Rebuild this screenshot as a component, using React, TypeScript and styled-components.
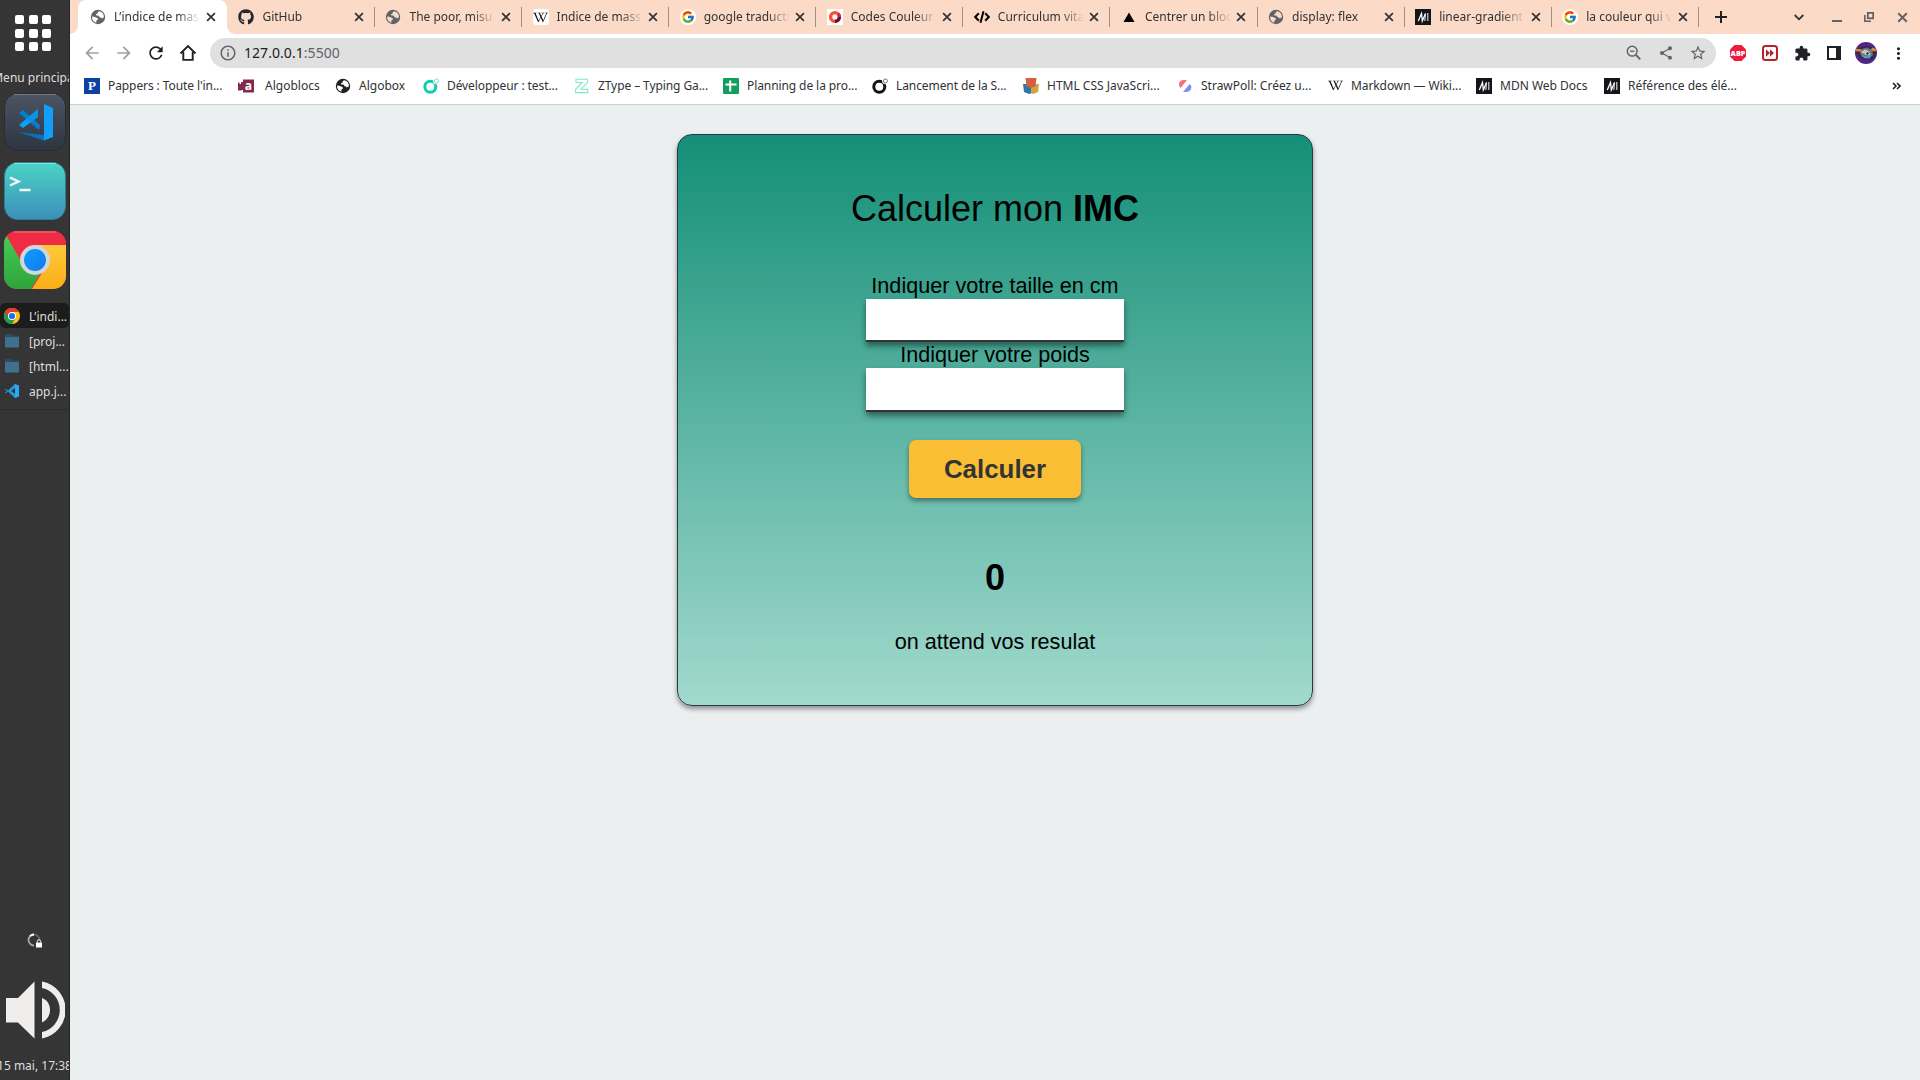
import React from "react";
import styled, { createGlobalStyle, css } from "styled-components";
import { FaGithub, FaWikipediaW } from "react-icons/fa";
import { FcGoogle } from "react-icons/fc";
import {
  MdArrowBack,
  MdArrowForward,
  MdRefresh,
  MdOutlineInfo,
  MdShare,
  MdStarBorder,
  MdExtension,
  MdMoreVert,
} from "react-icons/md";

const GlobalStyle = createGlobalStyle`
  * { box-sizing: border-box; }
  body { margin: 0; background: #ebeff0; overflow: hidden; }
`;

const Desktop = styled.div`
  display: flex;
  width: 1920px;
  height: 1080px;
  overflow: hidden;
  font-family: "Noto Sans", sans-serif;
  font-size: 12px;
`;

/* ---------- Dock ---------- */

const Dock = styled.aside`
  display: flex;
  flex-direction: column;
  align-items: center;
  flex: none;
  width: 70px;
  height: 1080px;
  padding-top: 15px;
  overflow: hidden;
  background: #353535;
  border-right: 1px solid #262626;
  color: #dfdfdf;
`;

const AppGrid = styled.div`
  display: grid;
  grid-template-columns: repeat(3, 9px);
  grid-auto-rows: 9px;
  gap: 4.5px;
  width: 36px;
  margin-right: 3px;
`;

const GridDot = styled.i`
  background: #fff;
  border-radius: 2px;
`;

const DockLabel = styled.div<{ $top: number }>`
  display: flex;
  justify-content: center;
  align-self: stretch;
  margin-top: ${(p) => p.$top}px;
  height: 18px;
  line-height: 18px;
  white-space: nowrap;
`;

const Launchers = styled.div`
  display: flex;
  flex-direction: column;
  gap: 11.3px;
  margin-top: 5.5px;
  svg { display: block; }
`;

const TaskList = styled.div`
  display: flex;
  flex-direction: column;
  align-self: stretch;
  margin-top: 14px;
  padding-bottom: 6px;
  border-bottom: 1px solid #2c2c2c;
`;

const Task = styled.div<{ $active?: boolean }>`
  display: flex;
  align-items: center;
  gap: 9px;
  height: 25px;
  padding-left: 4px;
  padding-top: 1px;
  border-radius: 5px;
  white-space: nowrap;
  overflow: hidden;
  background: ${(p) => (p.$active ? "#1c1c1c" : "transparent")};
  svg { flex: none; }
`;

const Tray = styled.div`
  display: flex;
  flex-direction: column;
  align-items: center;
  margin-top: auto;
  align-self: stretch;
  padding-bottom: 5px;
  svg { display: block; }
`;

const SpeakerSlot = styled.div`
  margin-top: 32px;
  margin-left: 1px;
`;

/* ---------- Browser chrome ---------- */

const Browser = styled.main`
  display: flex;
  flex-direction: column;
  width: 1850px;
`;

const TabStrip = styled.div`
  display: flex;
  height: 34px;
  flex: none;
  padding-left: 8px;
  background: #fcdac8;
`;

const Tab = styled.div<{ $active?: boolean; $divider?: boolean }>`
  display: flex;
  align-items: center;
  position: relative;
  width: 147.1px;
  height: 34px;
  padding-left: 10px;
  flex: none;
  color: #303236;
  ${(p) =>
    p.$active &&
    css`
      width: 149px;
      margin-right: 1.4px;
      padding-left: 12px;
      background: #fff;
      border-radius: 8px 8px 0 0;
      &::before,
      &::after {
        content: "";
        position: absolute;
        bottom: 0;
        width: 8px;
        height: 8px;
      }
      &::before {
        left: -8px;
        background: radial-gradient(circle at 0 0, transparent 7.5px, #fff 8px);
      }
      &::after {
        right: -8px;
        background: radial-gradient(circle at 100% 0, transparent 7.5px, #fff 8px);
      }
    `}
  ${(p) =>
    p.$divider &&
    css`
      &::after {
        content: "";
        position: absolute;
        right: 0.5px;
        top: 7px;
        width: 1px;
        height: 20px;
        background: #a08d86;
      }
    `}
`;

const Favicon = styled.span<{ $bg?: string; $round?: string }>`
  display: flex;
  align-items: center;
  justify-content: center;
  flex: none;
  width: 16px;
  height: 16px;
  background: ${(p) => p.$bg ?? "transparent"};
  border-radius: ${(p) => p.$round ?? "0"};
  svg { display: block; flex: none; }
`;

const TabTitle = styled.span`
  width: 88px;
  margin-left: 8px;
  white-space: nowrap;
  line-height: 18px;
  mask-image: linear-gradient(to right, #000 63px, transparent 86px);
`;

const CloseSlot = styled.span`
  display: flex;
  margin-left: 3.5px;
`;

const NewTab = styled.div`
  display: flex;
  align-items: center;
  margin-left: 15.6px;
`;

const WindowButtons = styled.div`
  display: flex;
  align-items: center;
  margin-left: auto;
  padding-right: 12px;
`;

const WinButton = styled.span<{ $gap: number }>`
  display: flex;
  margin-right: ${(p) => p.$gap}px;
`;

const Toolbar = styled.div`
  display: flex;
  align-items: center;
  height: 38px;
  flex: none;
  padding-left: 12px;
  background: #fff;
  color: #202124;
`;

const NavButton = styled.span<{ $muted?: boolean }>`
  display: flex;
  justify-content: center;
  width: 20px;
  margin-right: 12px;
  color: ${(p) => (p.$muted ? "#a0a1a3" : "#202124")};
`;

const Omnibox = styled.div`
  display: flex;
  align-items: center;
  width: 1506px;
  height: 30px;
  padding: 0 9px;
  border-radius: 15px;
  background: #e0e0e0;
  color: #5f6368;
`;

const Address = styled.span`
  margin-left: 7px;
  margin-right: auto;
  font-size: 14px;
  line-height: 20px;
  letter-spacing: 0.05px;
  b { font-weight: 400; color: #202124; }
`;

const OmniIcon = styled.span`
  display: flex;
  justify-content: center;
  width: 18px;
  margin-left: 14px;
`;

const Extensions = styled.div`
  display: flex;
  align-items: center;
  padding-left: 11px;
`;

const Extension = styled.span<{ $w: number }>`
  display: flex;
  justify-content: center;
  width: ${(p) => p.$w}px;
`;

const BookmarkBar = styled.div`
  display: flex;
  align-items: center;
  height: 33px;
  flex: none;
  padding: 0 19px 5px 14px;
  background: #fff;
  border-bottom: 1px solid #c9d1ce;
  color: #303236;
`;

const Bookmark = styled.div<{ $w: number; $tight?: boolean }>`
  display: flex;
  align-items: center;
  gap: 8px;
  flex: none;
  width: ${(p) => p.$w}px;
  height: 26px;
  line-height: 18px;
  letter-spacing: ${(p) => (p.$tight ? "-0.09px" : "normal")};
  white-space: nowrap;
`;

/* Algoblocs has a wider icon slot than its neighbours. */
const WideIcon = styled.span`
  display: flex;
  padding-right: 3px;
`;

const MoreBookmarks = styled.span`
  display: flex;
  margin-left: auto;
`;

const Letter = styled.span`
  font: bold 13px/16px "Liberation Serif", serif;
  color: #fff;
`;

/* ---------- Page ---------- */

const Page = styled.section`
  flex: 1;
  padding-top: 29px;
  padding-left: 607px;
  background: #ebeff0;
  font-family: "Liberation Sans", Arial, sans-serif;
  color: #000;
`;

const Card = styled.div`
  display: flex;
  flex-direction: column;
  align-items: center;
  width: 636px;
  height: 572px;
  padding-top: 53px;
  border: 1px solid #273746;
  border-radius: 15px;
  background: linear-gradient(#148f77, #a2d9ce);
  box-shadow: 0 3px 5px rgba(0, 0, 0, 0.4);
`;

const Title = styled.h1`
  margin: 0 0 43px;
  font-size: 36px;
  font-weight: 400;
  line-height: 42px;
`;

const Label = styled.label`
  font-size: 21.6px;
  line-height: 26px;
`;

const Field = styled.input<{ $h: number }>`
  width: 258px;
  height: ${(p) => p.$h}px;
  padding: 0 10px;
  border: 0;
  border-bottom: 2px solid #333;
  outline: 0;
  background: #fff;
  box-shadow: 0 4px 6px rgba(0, 0, 0, 0.45);
`;

const Submit = styled.button`
  width: 172px;
  height: 58px;
  margin: 28px 0 59px;
  padding: 0;
  border: 0;
  border-radius: 7px;
  background: #f9be33;
  box-shadow: 0 3px 5px rgba(0, 0, 0, 0.4);
  color: #333;
  font: bold 25.92px/58px "Liberation Sans", Arial, sans-serif;
`;

const Score = styled.strong`
  font-size: 36px;
  line-height: 42px;
`;

const Result = styled.p`
  margin: 30px 0 0;
  font-size: 21.6px;
  line-height: 26px;
`;

/* ---------- Drawings ---------- */

const Globe = ({ color = "#5f6368", land = "#fcdac8" }) => (
  <svg width="16" height="16" viewBox="0 0 16 16">
    <circle cx="8" cy="8" r="7.2" fill={color} />
    <path
      d="M9.2 2.2 7.8 3.1 7.6 4.6 6 5.2 6.2 6.5 8.4 6.6 9.6 8.2 11.2 8.4 11.4 9.6 13.9 8.5A6 6 0 0 0 9.2 2.2Z"
      fill={land}
    />
    <path
      d="M2.1 7.6 4.2 7.7 6.2 8.4 7.9 9.4 7.8 10.8 6.4 11.4 6.3 13.7 A6 6 0 0 1 2.1 7.6Z"
      fill={land}
    />
  </svg>
);

const Cross = ({ size = 10, color = "#303236", w = 1.55 }) => (
  <svg width={size} height={size} viewBox="0 0 9 9">
    <path d="M1 1 8 8M8 1 1 8" stroke={color} strokeWidth={w} />
  </svg>
);

const MdnMark = () => (
  <Favicon $bg="#15141a">
    <svg width="16" height="16" viewBox="0 0 16 16" fill="none">
      <path d="M3.300 12 6.500 4.500 7.300 12 10.500 4.500" stroke="#fff" strokeWidth="1.300" />
      <path d="M10.500 4.500 9.800 12M12.800 4V12" stroke="#e4e4e6" strokeWidth="1.100" />
    </svg>
  </Favicon>
);

const CodeMark = () => (
  <svg width="16" height="16" viewBox="0 0 16 16" fill="none" stroke="#000" strokeWidth="2">
    <path d="M4.8 4.2 1.2 8l3.6 3.8M11.2 4.2 14.8 8l-3.6 3.8M9.5 2.3 6.5 13.7" />
  </svg>
);

const RedRing = () => (
  <svg width="16" height="16" viewBox="0 0 16 16" fill="none" strokeWidth="3.4">
    <circle cx="8" cy="8" r="4.400" stroke="#f9502f" />
    <path d="M12.4 8A4.4 4.4 0 0 1 8 12.4" stroke="#5d1440" />
    <path d="M11.100 4.900A4.4 4.4 0 0 1 12.4 8" stroke="#c92d3f" />
  </svg>
);

const RingMark = ({ color }: { color: string }) => (
  <svg width="16" height="16" viewBox="0 0 16 16" fill="none" stroke={color}>
    <circle cx="7.3" cy="8.7" r="5.5" strokeWidth="3" />
    <circle cx="13.4" cy="3" r="2.3" stroke="#fff" strokeWidth="2" />
    <circle cx="13.4" cy="3" r="2" strokeWidth="0.8" opacity="0.7" />
  </svg>
);

const AlgoblocsMark = () => (
  <svg width="16" height="16" viewBox="0 0 16 16">
    <path d="M5 1.500h11v13H5V12H3.500v.500H0V4.500h1.500V6H3V4h2Z" fill="#822a4c" />
    <text x="6.800" y="12" fill="#fff" fontFamily="Open Sans, sans-serif" fontWeight="700" fontSize="12">a</text>
  </svg>
);

const ZMark = () => (
  <svg width="16" height="16" viewBox="0 0 16 16" fill="none" stroke="#7cebc4" strokeWidth="1.1">
    <path d="M2 1.2h11.6v3.2L7 11.2h6.8v3.4H1.6v-3.3L8.2 4.5H2Z" />
  </svg>
);

const SheetMark = () => (
  <svg width="16" height="16" viewBox="0 0 16 16">
    <rect width="16" height="16" rx="1" fill="#149e5c" />
    <path d="M2.5 6.5h11M7.2 2.5v11" stroke="#fff" strokeWidth="2" />
  </svg>
);

const ShieldsMark = () => (
  <svg width="16" height="16" viewBox="0 0 16 16">
    <path d="M0 6h8v9.2L6 16 1 14Z" fill="#2c78ad" />
    <path d="M8 6h8l-1 8-5 2-2-.8Z" fill="#d3a243" />
    <path d="M2.5 0h11l-1 8.2L8 10 3.5 8.2Z" fill="#d4603f" />
  </svg>
);

const StrawMark = () => (
  <svg width="16" height="16" viewBox="0 0 16 16">
    <path d="M10 2 3.6 10A4.8 4.8 0 0 1 2 6.4C2 3.7 4 2 6.6 2Z" fill="#f77073" />
    <path d="M6 14l6.6-8c1.1.8 1.7 2 1.7 3.3C14.300 12 12 14 9.400 14Z" fill="#818cf8" />
  </svg>
);

const ZoomOutMark = () => (
  <svg width="18" height="18" viewBox="0 0 18 18" fill="none" stroke="#5f6368">
    <circle cx="7.200" cy="7.200" r="4.900" strokeWidth="1.500" />
    <path d="M11 11 15.300 15.300" strokeWidth="1.800" />
    <path d="M5 7.200h4.400" strokeWidth="1.300" />
  </svg>
);

const CodeTile = () => (
  <svg width="62" height="58" viewBox="0 0 62 58">
    <defs>
      <linearGradient id="slate" x1="0" y1="0" x2="0" y2="1">
        <stop offset="0" stopColor="#4d5563" />
        <stop offset="1" stopColor="#2c3540" />
      </linearGradient>
    </defs>
    <rect x=".5" y=".5" width="61" height="57" rx="13" fill="url(#slate)" stroke="#282c32" />
    <path d="M10 1.500h42" stroke="#737b87" />
    <path d="M15 20 19 17 36 32 35 37Z" fill="#007fd4" />
    <path d="M15 32 34 16v8L19 35Z" fill="#0ba1f5" />
    <path d="M34 16v8l-9 5-3-3Z" fill="#0b91e8" />
    <path d="M14 39 40 42V47.500Z" fill="#0871b9" />
    <path d="M40 11 49 15V44L40 47.500Z" fill="#129ffb" />
  </svg>
);

const TerminalTile = () => (
  <svg width="62" height="58" viewBox="0 0 62 58">
    <defs>
      <linearGradient id="teal" x1="0" y1="0" x2="0" y2="1">
        <stop offset="0" stopColor="#4bd4c6" />
        <stop offset="1" stopColor="#3c8fba" />
      </linearGradient>
    </defs>
    <rect x=".5" y=".5" width="61" height="57" rx="13" fill="url(#teal)" stroke="#317d8b" />
    <path d="M10 1.500h42" stroke="#83e5dc" />
    <path d="M6 15.500 14.500 19.500 6 23.500M15.500 28h11" fill="none" stroke="#f4f8f8" strokeWidth="2.400" />
  </svg>
);

const ChromeTile = () => (
  <svg width="62" height="58" viewBox="0 0 62 58">
    <defs>
      <clipPath id="tile"><rect width="62" height="58" rx="13" /></clipPath>
      <linearGradient id="gr" x1="0" y1="0" x2="0" y2="1">
        <stop offset="0" stopColor="#47cf54" />
        <stop offset="1" stopColor="#2fa33c" />
      </linearGradient>
      <linearGradient id="ye" x1="0" y1="0" x2="0" y2="1">
        <stop offset="0" stopColor="#fdc93a" />
        <stop offset="1" stopColor="#fbae17" />
      </linearGradient>
      <linearGradient id="bl" x1="0" y1="0" x2="1" y2="1">
        <stop offset="0" stopColor="#0a9fff" />
        <stop offset="1" stopColor="#1479ec" />
      </linearGradient>
    </defs>
    <g clipPath="url(#tile)">
      <rect width="62" height="58" fill="#ee2d45" />
      <path d="M0 0 20 34 40 36 27 58H0Z" fill="url(#gr)" />
      <path d="M0 0H20L62 0V14H31L18 32 2 4Z" fill="#ee2d45" />
      <path d="M31 14H62V58H28L44 32Z" fill="url(#ye)" />
      <path d="M10 1h42" stroke="#f8717f" />
    </g>
    <circle cx="31" cy="29" r="15" fill="#d3d6da" />
    <circle cx="31" cy="29" r="11" fill="url(#bl)" />
  </svg>
);

const ChromeSmall = () => (
  <svg width="16" height="16" viewBox="0 0 16 16">
    <circle cx="8" cy="8" r="8" fill="#fbc116" />
    <path d="M8 8 1.070 4A8 8 0 0 0 8 16L11.500 10Z" fill="#229b47" />
    <path d="M1.070 4A8 8 0 0 1 14.930 4H8L4.500 10Z" fill="#e33b2e" />
    <circle cx="8" cy="8" r="4" fill="#fff" />
    <circle cx="8" cy="8" r="3.100" fill="#1b73e8" />
  </svg>
);

const FolderSmall = () => (
  <svg width="16" height="16" viewBox="0 0 16 16">
    <path d="M1 2.500 2 1h4.500l1.500 1.500h7V8H1Z" fill="#294f68" />
    <rect x="1" y="4" width="14" height="10.500" rx="1" fill="#41708f" />
  </svg>
);

const CodeSmall = () => (
  <svg width="16" height="16" viewBox="0 0 16 16">
    <path d="M11 1 15 2.700V13.300L11 15 4 8.500 2 10.200 1 9.600 3 8 1 6.400 2 5.800 4 7.500ZM11 5 7.300 8 11 11Z" fill="#2497e0" fillRule="evenodd" />
    <path d="M11 1 15 2.700V13.300L11 15Z" fill="#2ba8f5" />
  </svg>
);

const Connecting = () => (
  <svg width="16" height="16" viewBox="0 0 16 16" fill="none">
    <path d="M7 1.500A5.500 5.500 0 0 0 7 12.500" stroke="#a8a8a8" strokeWidth="1.800" />
    <path d="M3 3.200A5.500 5.500 0 0 1 7 1.500" stroke="#fff" strokeWidth="1.800" />
    <path d="M7 1.500A5.500 5.500 0 0 1 12.500 7" stroke="#646464" strokeWidth="1.800" />
    <rect x="9" y="9.500" width="6" height="5" fill="#fff" />
    <path d="M10.300 9.500V8.500a1.700 1.700 0 0 1 3.400 0v1" stroke="#fff" />
  </svg>
);

const Speaker = () => (
  <svg width="60" height="58" viewBox="0 0 60 58" fill="#efeeec">
    <path d="M1 17H13L29.500 0.500V57.500L13 41.500H1Z" />
    <path d="M37 17C41.500 18.500 45 23 45 29S41.500 39.500 37 41.500Z" />
    <path d="M37 .500A29 29 0 0 1 37 57.500V51A22.500 22.500 0 0 0 37 7Z" />
  </svg>
);

const Avatar = () => (
  <svg width="22" height="22" viewBox="0 0 22 22">
    <circle cx="11" cy="11" r="11" fill="#51258b" />
    <path d="M1 8.500 4 6 10 4l8 1.500 3 2.500-.500 6-4 3.500-6 .500-6-3-3-3Z" fill="#3b2b38" />
    <path d="M1 8 6 8.500 8 11M21 8.500 18 7 16 9" stroke="#d08544" strokeWidth="2.600" fill="none" />
    <path d="M5 11 8 6.500 12 5.500 17 8l1 5-4 3.500L7 15Z" fill="#62788a" />
    <path d="M6 10 10 7.500l5 2-3 1-4 1Z" fill="#d9c3a7" />
    <path d="M6 12.500 9 14l4 .500 3-2-1 3.500-5 .500Z" fill="#4aa3d4" />
    <path d="M9 12 12 10l3.500 1.500-2 2Z" fill="#e8ecee" />
    <circle cx="12.500" cy="11.500" r="1.200" fill="#1d1d29" />
  </svg>
);

/* ---------- Data ---------- */

const wiki = <FaWikipediaW size={15} color="#111" />;

const tabs: { title: string; icon: React.ReactNode; bg?: string; round?: string }[] = [
  { title: "L’indice de mas", icon: <Globe land="#fff" /> },
  { title: "GitHub", icon: <FaGithub size={16} color="#24292f" /> },
  { title: "The poor, misu", icon: <Globe /> },
  { title: "Indice de mass", icon: wiki, bg: "#fff", round: "3px" },
  { title: "google traducti", icon: <FcGoogle size={14} />, bg: "#fff", round: "8px" },
  { title: "Codes Couleur", icon: <RedRing />, bg: "#fff" },
  { title: "Curriculum vita", icon: <CodeMark /> },
  {
    title: "Centrer un bloc",
    icon: (
      <svg width="16" height="16" viewBox="0 0 16 16">
        <path d="M8 3.500 13.500 13H2.500Z" fill="#000" />
      </svg>
    ),
  },
  { title: "display: flex", icon: <Globe /> },
  { title: "linear-gradient", icon: <MdnMark /> },
  { title: "la couleur qui v", icon: <FcGoogle size={14} />, bg: "#fff", round: "8px" },
];

const bookmarks: {
  title: string;
  w: number;
  icon: React.ReactNode;
  bg?: string;
  tight?: boolean;
}[] = [
  { title: "Pappers : Toute l'in...", w: 154, icon: <Letter>P</Letter>, bg: "#0d41a3", tight: true },
  { title: "Algoblocs", w: 97, icon: <AlgoblocsMark /> },
  { title: "Algobox", w: 88, icon: <Globe color="#202124" land="#fff" /> },
  { title: "Développeur : test...", w: 151, icon: <RingMark color="#10cbb0" />, tight: true },
  { title: "ZType – Typing Ga...", w: 149, icon: <ZMark />, tight: true },
  { title: "Planning de la pro...", w: 149, icon: <SheetMark />, tight: true },
  { title: "Lancement de la S...", w: 151, icon: <RingMark color="#12110d" />, tight: true },
  { title: "HTML CSS JavaScri...", w: 154, icon: <ShieldsMark /> },
  { title: "StrawPoll: Créez u...", w: 150, icon: <StrawMark /> },
  { title: "Markdown — Wiki...", w: 149, icon: wiki, tight: true },
  { title: "MDN Web Docs", w: 128, icon: <MdnMark /> },
  { title: "Référence des élé...", w: 160, icon: <MdnMark /> },
];

const tasks = [
  { title: "L’indi...", icon: <ChromeSmall />, active: true },
  { title: "[proj...", icon: <FolderSmall /> },
  { title: "[html...", icon: <FolderSmall /> },
  { title: "app.j...", icon: <CodeSmall /> },
];

export default function App() {
  return (
    <Desktop>
      <GlobalStyle />
      <Dock>
        <AppGrid>
          {Array.from({ length: 9 }, (_, i) => (
            <GridDot key={i} />
          ))}
        </AppGrid>
        <DockLabel $top={18}>Menu principal</DockLabel>
        <Launchers>
          <CodeTile />
          <TerminalTile />
          <ChromeTile />
        </Launchers>
        <TaskList>
          {tasks.map((t) => (
            <Task key={t.title} $active={t.active}>
              {t.icon}
              {t.title}
            </Task>
          ))}
        </TaskList>
        <Tray>
          <Connecting />
          <SpeakerSlot>
            <Speaker />
          </SpeakerSlot>
          <DockLabel $top={18}>15 mai, 17:38</DockLabel>
        </Tray>
      </Dock>

      <Browser>
        <TabStrip>
          {tabs.map((t, i) => (
            <Tab key={t.title} $active={i === 0} $divider={i > 0}>
              <Favicon $bg={t.bg} $round={t.round}>{t.icon}</Favicon>
              <TabTitle>{t.title}</TabTitle>
              <CloseSlot><Cross /></CloseSlot>
            </Tab>
          ))}
          <NewTab>
            <svg width="12" height="12" viewBox="0 0 12 12">
              <path d="M6 0v12M0 6h12" stroke="#202124" strokeWidth="2" />
            </svg>
          </NewTab>
          <WindowButtons>
            <WinButton $gap={28}>
              <svg width="10" height="7" viewBox="0 0 10 7">
                <path d="M.700 1 5 5.300 9.300 1" fill="none" stroke="#303236" strokeWidth="1.800" />
              </svg>
            </WinButton>
            <WinButton $gap={22}>
              <svg width="10" height="10" viewBox="0 0 10 10">
                <path d="M0 9h10" stroke="#5f6368" strokeWidth="2" />
              </svg>
            </WinButton>
            <WinButton $gap={23}>
              <svg width="10" height="10" viewBox="0 0 10 10" fill="none" stroke="#5f6368">
                <rect x="3.800" y=".900" width="5.400" height="5.400" strokeWidth="1.800" />
                <path d="M.800 3V9.200H7" strokeWidth="1.600" />
              </svg>
            </WinButton>
            <WinButton $gap={0}>
              <Cross size={11} color="#5f6368" w={1.6} />
            </WinButton>
          </WindowButtons>
        </TabStrip>

        <Toolbar>
          <NavButton $muted><MdArrowBack size={20} /></NavButton>
          <NavButton $muted><MdArrowForward size={20} /></NavButton>
          <NavButton><MdRefresh size={20} /></NavButton>
          <NavButton>
            <svg width="18" height="18" viewBox="0 0 18 18">
              <path d="M1.500 9.500 9 2l7.500 7.500M4.300 8v7.900h9.400V8" fill="none" stroke="#202124" strokeWidth="1.900" />
            </svg>
          </NavButton>
          <Omnibox>
            <MdOutlineInfo size={18} />
            <Address><b>127.0.0.1</b>:5500</Address>
            <OmniIcon><ZoomOutMark /></OmniIcon>
            <OmniIcon><MdShare size={16} /></OmniIcon>
            <OmniIcon><MdStarBorder size={18} /></OmniIcon>
          </Omnibox>
          <Extensions>
            <Extension $w={22}>
              <svg width="18" height="18" viewBox="0 0 18 18">
                <path d="M5.500 1h7L17 5.500v7L12.500 17h-7L1 12.500v-7Z" fill="#ee1b3c" />
                <text x="9" y="11.700" textAnchor="middle" fill="#fff" fontFamily="Open Sans, sans-serif" fontWeight="800" fontSize="7.300">ABP</text>
              </svg>
            </Extension>
            <Extension $w={42}>
              <svg width="16" height="16" viewBox="0 0 16 16">
                <rect x="1" y="1" width="14" height="14" rx="2.500" fill="#fff" stroke="#b8232a" strokeWidth="2" />
                <path d="M4 4.300 8 8 4 11.700ZM8 4.300l4 3.700L8 11.700Z" fill="#b8232a" />
              </svg>
            </Extension>
            <Extension $w={22}><MdExtension size={17} /></Extension>
            <Extension $w={42}>
              <svg width="14" height="14" viewBox="0 0 14 14">
                <path d="M0 0h14v14H0ZM2 2v10h7V2Z" fill="#202124" fillRule="evenodd" />
              </svg>
            </Extension>
            <Extension $w={22}><Avatar /></Extension>
            <Extension $w={42}><MdMoreVert size={19} /></Extension>
          </Extensions>
        </Toolbar>

        <BookmarkBar>
          {bookmarks.map((b) => (
            <Bookmark key={b.title} $w={b.w} $tight={b.tight}>
              {b.title === "Algoblocs" ? (
                <WideIcon>{b.icon}</WideIcon>
              ) : (
                <Favicon $bg={b.bg}>{b.icon}</Favicon>
              )}
              {b.title}
            </Bookmark>
          ))}
          <MoreBookmarks>
            <svg width="9" height="8" viewBox="0 0 9 8" fill="none" stroke="#202124" strokeWidth="1.600">
              <path d="M1 1 4 4 1 7M5 1 8 4 5 7" />
            </svg>
          </MoreBookmarks>
        </BookmarkBar>

        <Page>
          <Card>
            <Title>Calculer mon <b>IMC</b></Title>
            <Label htmlFor="taille">Indiquer votre taille en cm</Label>
            <Field id="taille" $h={43} />
            <Label htmlFor="poids">Indiquer votre poids</Label>
            <Field id="poids" $h={44} />
            <Submit>Calculer</Submit>
            <Score>0</Score>
            <Result>on attend vos resulat</Result>
          </Card>
        </Page>
      </Browser>
    </Desktop>
  );
}
